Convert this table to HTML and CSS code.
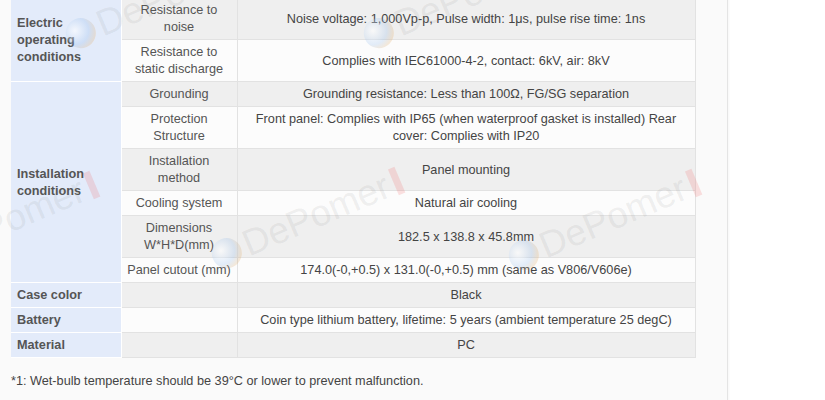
FILE: index.html
```html
<!DOCTYPE html>
<html lang="en">
<head>
<meta charset="utf-8">
<title>Specifications</title>
<link rel="stylesheet" href="styles.css">
</head>
<body>
<div class="page">
  <div class="panel">
    <table class="spec">
      <colgroup><col class="c1"><col class="c2"><col class="c3"></colgroup>
      <tr class="gray">
        <th rowspan="2">Electric operating conditions</th>
        <td class="sub">Resistance to noise</td>
        <td>Noise voltage: 1,000Vp-p, Pulse width: 1μs, pulse rise time: 1ns</td>
      </tr>
      <tr class="white">
        <td class="sub">Resistance to static discharge</td>
        <td>Complies with IEC61000-4-2, contact: 6kV, air: 8kV</td>
      </tr>
      <tr class="gray">
        <th rowspan="6">Installation conditions</th>
        <td class="sub">Grounding</td>
        <td>Grounding resistance: Less than 100Ω, FG/SG separation</td>
      </tr>
      <tr class="white">
        <td class="sub">Protection Structure</td>
        <td>Front panel: Complies with IP65 (when waterproof gasket is installed) Rear cover: Complies with IP20</td>
      </tr>
      <tr class="gray">
        <td class="sub">Installation method</td>
        <td>Panel mounting</td>
      </tr>
      <tr class="white">
        <td class="sub">Cooling system</td>
        <td>Natural air cooling</td>
      </tr>
      <tr class="gray">
        <td class="sub">Dimensions W*H*D(mm)</td>
        <td>182.5 x 138.8 x 45.8mm</td>
      </tr>
      <tr class="white">
        <td class="sub">Panel cutout (mm)</td>
        <td>174.0(-0,+0.5) x 131.0(-0,+0.5) mm (same as V806/V606e)</td>
      </tr>
      <tr class="gray">
        <th>Case color</th>
        <td class="sub"></td>
        <td>Black</td>
      </tr>
      <tr class="white">
        <th>Battery</th>
        <td class="sub"></td>
        <td>Coin type lithium battery, lifetime: 5 years (ambient temperature 25 degC)</td>
      </tr>
      <tr class="gray">
        <th>Material</th>
        <td class="sub"></td>
        <td>PC</td>
      </tr>
    </table>
    <p class="note">*1: Wet-bulb temperature should be 39°C or lower to prevent malfunction.</p>

    <div class="wm wm1"><span class="globe"></span>DePomer<span class="bar"></span></div>
    <div class="wm wm2"><span class="globe"></span>DePomer<span class="bar"></span></div>
    <div class="wm wm3"><span class="globe"></span>DePomer<span class="bar"></span></div>
    <div class="wm wm4"><span class="globe"></span>DePomer<span class="bar"></span></div>
    <div class="wm wm5"><span class="globe"></span>DePomer<span class="bar"></span></div>
  </div>
</div>
</body>
</html>
```
FILE: styles.css
```css
html, body {
  margin: 0;
  padding: 0;
  background: #ffffff;
  overflow: hidden;
}
.page {
  width: 825px;
  height: 400px;
  overflow: hidden;
}
.panel {
  position: relative;
  width: 716px;
  height: 410px;
  margin-top: -3px;
  padding-left: 11px;
  background: #fafafa;
  border-right: 1px solid #e4e4e4;
  box-shadow: 1px 0 2px rgba(0,0,0,0.04);
  font-family: "Liberation Sans", Arial, sans-serif;
  font-size: 12.7px;
  line-height: 17px;
  color: #444;
  overflow: hidden;
}
.spec {
  width: 684px;
  border-collapse: collapse;
  table-layout: fixed;
}
.c1 { width: 110px; }
.c2 { width: 116px; }
.c3 { width: 458px; }
.spec th, .spec td {
  padding: 4px 5px 3px;
  border: 1px solid #e2e2e2;
  vertical-align: middle;
}
.spec th {
  background: #e3ebfa;
  border: 1px solid #ffffff;
  border-left: 0;
  padding-left: 6px;
  text-align: left;
  font-weight: bold;
  color: #555;
}
.spec td {
  text-align: center;
}
.spec .sub {
  color: #555;
  border-left: 0;
}
.gray td { background: #efefef; }
.white td { background: #fcfcfc; }
.note {
  margin: 15px 0 0 0;
  color: #444;
}

/* watermarks */
.wm {
  position: absolute;
  display: flex;
  align-items: center;
  gap: 4px;
  font-family: "Liberation Sans", Arial, sans-serif;
  font-size: 37px;
  line-height: 40px;
  color: rgba(120,120,120,0.11);
  transform: rotate(-23deg);
  transform-origin: left center;
  white-space: nowrap;
  pointer-events: none;
}
.globe {
  width: 30px;
  height: 30px;
  border-radius: 50%;
  background: radial-gradient(circle at 35% 35%, rgba(255,255,255,0.6), rgba(120,170,230,0.2) 50%, rgba(240,170,80,0.26) 80%);
}
.bar {
  width: 7px;
  height: 28px;
  background: rgba(240,60,60,0.15);
  margin-left: 2px;
}
.wm1 { left: 67px; top: 22px; }
.wm2 { left: 365px; top: 22px; }
.wm3 { left: -92px; top: 246px; }
.wm4 { left: 213px; top: 242px; }
.wm5 { left: 510px; top: 244px; }
```
